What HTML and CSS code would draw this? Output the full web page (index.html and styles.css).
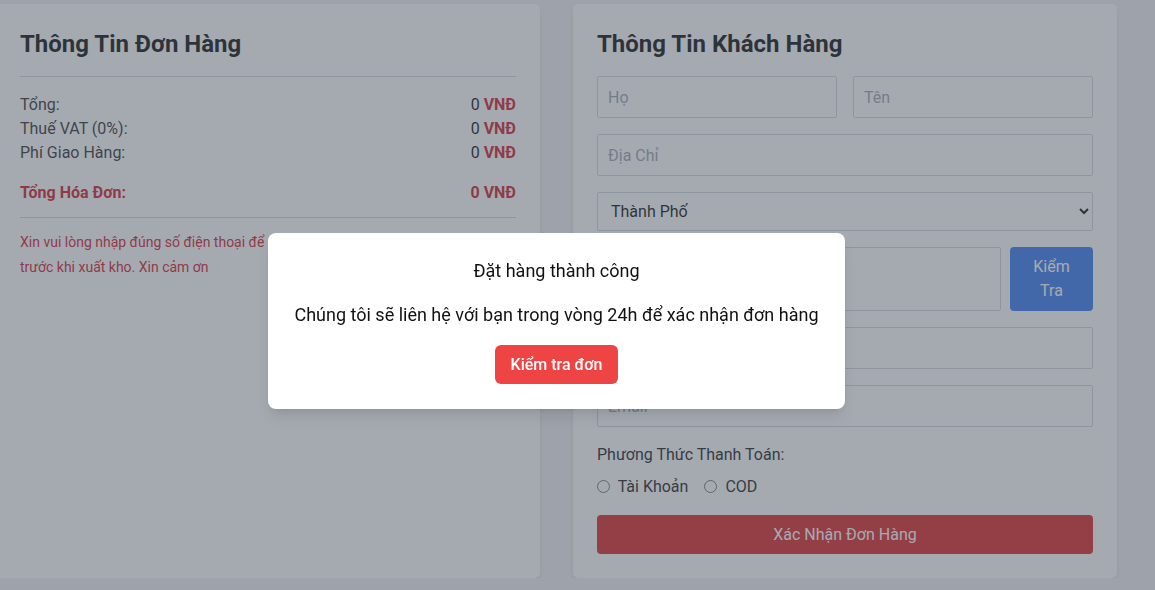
FILE: index.html
```html
<!DOCTYPE html>
<html lang="vi">
<head>
    <meta charset="UTF-8">
    <meta name="viewport" content="width=device-width, initial-scale=1.0">
    <title>Thanh Toán</title>
    <link rel="stylesheet" href="styles.css">
</head>
<body>
    <div class="checkout">
        <div class="card">
            <h2 class="card-title">Thông Tin Đơn Hàng</h2>
            <div class="summary">
                <div class="sum-row"><span>Tổng:</span><span class="money">0 <b>VNĐ</b></span></div>
                <div class="sum-row"><span>Thuế VAT (0%):</span><span class="money">0 <b>VNĐ</b></span></div>
                <div class="sum-row"><span>Phí Giao Hàng:</span><span class="money">0 <b>VNĐ</b></span></div>
                <div class="sum-row total"><span>Tổng Hóa Đơn:</span><span>0 VNĐ</span></div>
            </div>
            <p class="note">Xin vui lòng nhập đúng số điện thoại để chúng tôi liên hệ xác nhận đơn hàng trước khi xuất kho. Xin cảm ơn</p>
        </div>

        <div class="card">
            <h2 class="card-title">Thông Tin Khách Hàng</h2>
            <form class="cus-form">
                <div class="row">
                    <input type="text" class="field" placeholder="Họ">
                    <input type="text" class="field" placeholder="Tên">
                </div>
                <input type="text" class="field" placeholder="Địa Chỉ">
                <select class="field select">
                    <option>Thành Phố</option>
                </select>
                <div class="row phone-row">
                    <input type="text" class="field" placeholder="Số Điện Thoại">
                    <button type="button" class="btn-check">Kiểm Tra</button>
                </div>
                <input type="text" class="field" placeholder="Mã Giảm Giá">
                <input type="email" class="field" placeholder="Email">
                <div class="pay">
                    <p class="pay-label">Phương Thức Thanh Toán:</p>
                    <div class="radios">
                        <label><input type="radio" name="pay"> Tài Khoản</label>
                        <label><input type="radio" name="pay"> COD</label>
                    </div>
                </div>
                <button type="button" class="btn-submit">Xác Nhận Đơn Hàng</button>
            </form>
        </div>
    </div>

    <div class="overlay">
        <div class="modal">
            <p class="modal-title">Đặt hàng thành công</p>
            <p class="modal-text">Chúng tôi sẽ liên hệ với bạn trong vòng 24h để xác nhận đơn hàng</p>
            <button type="button" class="btn-order">Kiểm tra đơn</button>
        </div>
    </div>
</body>
</html>
```

FILE: styles.css
```css
*{
    box-sizing: border-box;
}
body{
    margin: 0;
    background-color: #f1f1f2;
    font-family: Roboto, "Noto Sans", sans-serif;
    color: #333;
    overflow: hidden;
}
.checkout{
    display: flex;
    gap: 33px;
    margin: 4px 0 0 -4px;
}
.card{
    width: 544px;
    height: 574px;
    background: #fff;
    border-radius: 5px;
    padding: 24px;
    box-shadow: 0 4px 6px -1px rgba(0,0,0,.1), 0 2px 4px -2px rgba(0,0,0,.1);
}
.card-title{
    margin: 0 0 16px;
    font-size: 24px;
    line-height: 32px;
    font-weight: 700;
    color: #111;
}
.summary{
    border-top: 1px solid #d1d5db;
    border-bottom: 1px solid #d1d5db;
    padding: 16px 0 12px;
}
.sum-row{
    display: flex;
    justify-content: space-between;
    font-size: 16px;
    line-height: 24px;
}
.money{
    color: #111;
}
.money b, .total{
    color: #d3202a;
    font-weight: 700;
}
.total{
    margin-top: 16px;
}
.note{
    margin: 12px 0 0;
    font-size: 14px;
    line-height: 25px;
    color: #d3202a;
}

.cus-form{
    display: flex;
    flex-direction: column;
    gap: 16px;
}
.row{
    display: flex;
    gap: 16px;
}
.row .field{
    flex: 1;
}
.phone-row{
    gap: 9px;
}
.field{
    width: 100%;
    height: 42px;
    padding: 0 10px;
    border: 1px solid #d1d5db;
    border-radius: 2px;
    font-family: inherit;
    font-size: 16px;
    color: #111;
    background: #fff;
}
.field::placeholder{
    color: #9ca3af;
}
.phone-row .field{
    height: auto;
}
.select{
    height: 39px;
    padding: 0 8px 0 9px;
}
.btn-check{
    width: 83px;
    padding: 8px 12px;
    border: none;
    border-radius: 4px;
    background: #3b7bef;
    color: #fff;
    font-family: inherit;
    font-size: 16px;
    line-height: 24px;
}
.pay-label{
    margin: 0 0 8px;
    font-size: 16px;
    line-height: 24px;
    color: #222;
}
.radios{
    display: flex;
    gap: 16px;
    font-size: 16px;
    line-height: 24px;
    color: #222;
}
.radios input{
    margin: 0 4px 0 0;
    vertical-align: -1px;
}
.btn-submit{
    height: 39px;
    border: none;
    border-radius: 4px;
    background: #dc2626;
    color: #fff;
    font-family: inherit;
    font-size: 16px;
}

.overlay{
    position: fixed;
    inset: 0;
    background: rgba(75, 85, 99, .5);
}
.modal{
    position: absolute;
    left: 268px;
    top: 233px;
    width: 577px;
    padding: 24px 20px 25px;
    background: #fff;
    border-radius: 8px;
    text-align: center;
    color: #111;
    box-shadow: 0 10px 15px -3px rgba(0,0,0,.1), 0 4px 6px -4px rgba(0,0,0,.1);
}
.modal p{
    margin: 0;
    font-size: 18px;
    line-height: 28px;
}
.modal-text{
    margin-top: 16px !important;
}
.btn-order{
    margin-top: 16px;
    height: 39px;
    padding: 0 16px;
    border: none;
    border-radius: 6px;
    background: #ef4444;
    color: #fff;
    font-family: inherit;
    font-size: 16px;
    font-weight: 500;
}
```
